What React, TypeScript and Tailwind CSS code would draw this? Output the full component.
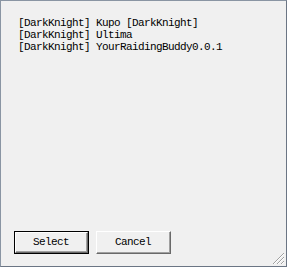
const LINES = [
  "[DarkKnight] Kupo [DarkKnight]",
  "[DarkKnight] Ultima",
  "[DarkKnight] YourRaidingBuddy0.0.1",
];

const mono = { fontFamily: '"Liberation Mono", "DejaVu Sans Mono", monospace' };

function ClassicButton({ label, isDefault }: { label: string; isDefault?: boolean }) {
  return (
    <div className={`w-[75px] h-[23px] ${isDefault ? "border border-black" : ""}`}>
      <div className="h-full w-full border-t border-l border-white border-r border-b border-r-[#696969] border-b-[#696969] bg-[#f0f0f0]">
        <div className="h-full w-full border-r border-b border-[#a0a0a0] flex items-center justify-center">
          <span className="text-[11px] tracking-[-0.6px] text-black leading-none" style={mono}>
            {label}
          </span>
        </div>
      </div>
    </div>
  );
}

export default function App() {
  return (
    <div className="w-[287px] h-[267px] bg-[#f0f0f0] border border-[#8a95a3] border-r-[#6b7584] border-b-[#6b7584] relative flex flex-col justify-between">
      {/* Message list */}
      <div className="pt-[16px] pl-[17px] text-black text-[11px] leading-[12px] tracking-[-0.6px]" style={mono}>
        {LINES.map((line) => (
          <div key={line} className="whitespace-pre">
            {line}
          </div>
        ))}
      </div>

      {/* Buttons */}
      <div className="flex gap-[7px] pl-[13px] pb-[12px]">
        <ClassicButton label="Select" isDefault />
        <ClassicButton label="Cancel" />
      </div>

      {/* Resize grip */}
      <svg className="absolute right-[1px] bottom-[1px]" width="13" height="13" viewBox="0 0 13 13">
        {[0, 4, 8].map((o) => (
          <g key={o}>
            <line x1={12} y1={1 + o} x2={1 + o} y2={12} stroke="#a0a0a0" strokeWidth="1" />
            <line x1={12} y1={2 + o} x2={2 + o} y2={12} stroke="#ffffff" strokeWidth="1" />
          </g>
        ))}
      </svg>
    </div>
  );
}
